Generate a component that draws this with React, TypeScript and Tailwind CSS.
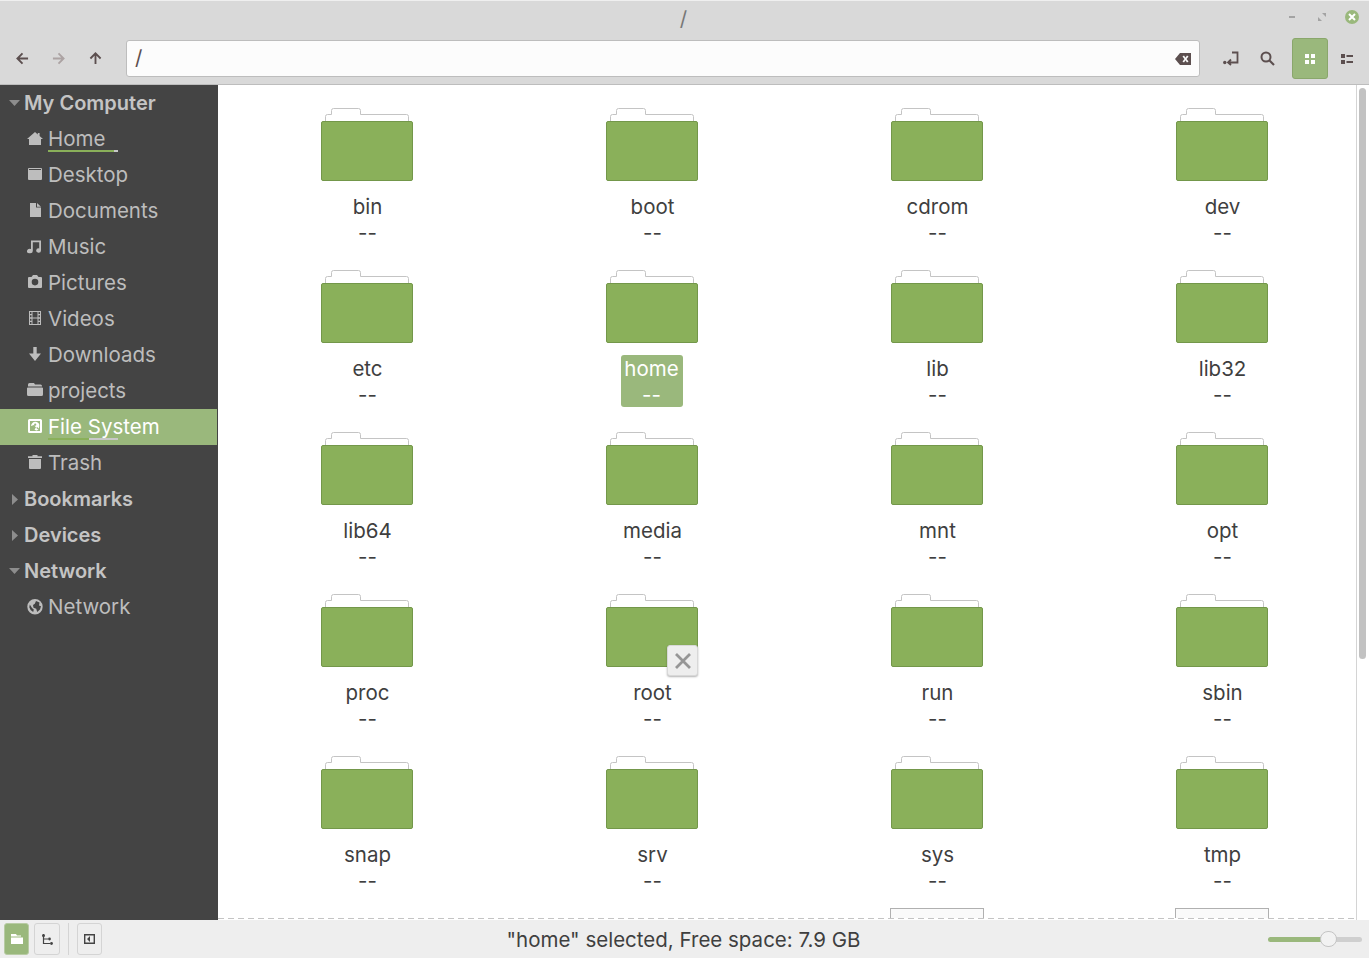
import React from "react";

const names = ["bin","boot","cdrom","dev","etc","home","lib","lib32","lib64","media","mnt","opt","proc","root","run","sbin","snap","srv","sys","tmp"];

function Folder() {
  return (
    <svg width="92" height="73" viewBox="0 0 92 73" className="block">
      <path d="M4.5 13.5V8.5Q4.5 6.5 6.5 6.5H10.5V2.5Q10.5 0.5 12.5 0.5H37.5Q39.5 0.5 39.5 2.5V6.5H85.5Q87.5 6.5 87.5 8.5V13.5Z" fill="#fff" stroke="#c4c4c4" />
      <rect x="0.5" y="13.5" width="91" height="59" rx="1.5" fill="#8ab05a" stroke="#73974a" />
    </svg>
  );
}

function Item({ name }: { name: string }) {
  const sel = name === "home";
  return (
    <div className="relative flex h-[162px] flex-col items-center">
      <div className="mt-[23px] -translate-x-px"><Folder /></div>
      {sel ? (
        <div className="mt-[12px] flex h-[52px] w-[62px] -translate-x-px flex-col items-center rounded-[3px] bg-[#9ab87c] text-white">
          <div className="h-[28px] leading-[28px]">{name}</div>
          <div className="h-[24px] leading-[24px]">--</div>
        </div>
      ) : (
        <div className="mt-[12px] flex flex-col items-center text-[#3f3f3f]">
          <div className="h-[28px] leading-[28px]">{name}</div>
          <div className="h-[24px] leading-[24px]">--</div>
        </div>
      )}
      {name === "root" && (
        <div className="absolute left-[157px] top-[74px] flex h-[31px] w-[31px] items-center justify-center rounded-[3px] border border-[#d8d8d8] bg-[#eeeeee] shadow-[0_1px_2px_rgba(0,0,0,0.3)]">
          <svg width="18" height="18" viewBox="0 0 18 18"><path d="M2 2L16 16M16 2L2 16" stroke="#969696" strokeWidth="2.8" /></svg>
        </div>
      )}
    </div>
  );
}

const I = ({ children }: { children: React.ReactNode }) => (
  <svg width={16} height={16} viewBox="0 0 16 16" fill="currentColor" className="block shrink-0">{children}</svg>
);

const icons: Record<string, React.ReactNode> = {
  Home: <I><path d="M8 1L10.8 3.4V2H12.6V5L16 8H14V14H2V8H0Z" /></I>,
  Desktop: <I><path fillRule="evenodd" d="M2 1H14Q15 1 15 2V12Q15 13 14 13H2Q1 13 1 12V2Q1 1 2 1ZM2 2V3H14V2Z" /></I>,
  Documents: <I><path d="M3 0H9V4.5H14V14H3ZM10 0L14 3.8H10Z" /></I>,
  Music: <I><path d="M4 1.5H14V11.5A2.4 2.2 0 1 1 12.2 9.4V3.2H5.8V12A2.9 2.2 0 1 1 4 10Z" /></I>,
  Pictures: <I><path fillRule="evenodd" d="M4.5 2L6 0H10L11.5 2H14Q15 2 15 3V12Q15 13 14 13H2Q1 13 1 12V3Q1 2 2 2ZM8 3.8A3.3 3.3 0 1 0 8 10.4A3.3 3.3 0 1 0 8 3.8Z" /></I>,
  Videos: <I><path fillRule="evenodd" d="M2 0H14V14H2ZM3 1V3H4.5V1ZM3 4.2V6.2H4.5V4.2ZM3 7.8V9.8H4.5V7.8ZM3 11V13H4.5V11ZM11.5 1V3H13V1ZM11.5 4.2V6.2H13V4.2ZM11.5 7.8V9.8H13V7.8ZM11.5 11V13H13V11ZM5.5 1V6.5H10.5V1ZM5.5 7.5V13H10.5V7.5Z" /></I>,
  Downloads: <I><path d="M6.3 0H9.7V6.5H14L8 14L2 6.5H6.3Z" /></I>,
  projects: <I><path d="M1 3.4V1.5Q1 0 2.5 0H7L8 1.5H13.5Q15 1.5 15 3V3.4ZM0 5.2Q0 4.4 1 4.4H15Q16 4.4 16 5.2V11.5Q16 13 14.5 13H1.5Q0 13 0 11.5Z" /></I>,
  "File System": <I><path fillRule="evenodd" d="M2.5 0H13.5Q15 0 15 1.5V12.5Q15 14 13.5 14H2.5Q1 14 1 12.5V1.5Q1 0 2.5 0ZM3 2V12H13V2ZM8.5 2.8A4.3 4.3 0 0 0 4 7L7 6L9 8.5L7.5 10.5L9 11.5H10L12 10V8.8Q13 5 11 3.8Q10 2.8 8.5 2.8ZM8.2 4.6A1.1 1.1 0 1 1 8.2 6.8A1.1 1.1 0 1 1 8.2 4.6ZM10 8L12 9.5L11.2 10.5L9.3 9Z" /></I>,
  Trash: <I><path d="M5.5 0H10.5V1.2H15V3H1V1.2H5.5ZM2 4H14V13Q14 14 13 14H3Q2 14 2 13Z" /></I>,
  Network: <I><path fillRule="evenodd" d="M8 0A7.7 7.7 0 1 0 8 15.4A7.7 7.7 0 1 0 8 0ZM9 2L12.5 3.5L12 6.5L14 7.2L13 10.5L10.2 13L9.2 9.8L6.5 8.8L6 6L7.8 4.8ZM2.8 5.5L5 9L6.8 10.6L6.2 13Q3 11.5 2.3 8.3Z" /></I>,
};

function Head({ label, open }: { label: string; open?: boolean }) {
  return (
    <div className="flex h-[36px] items-center text-[#c4c4c4]">
      <div className="flex w-[24px] justify-center pl-[5px] text-[#8d8d8d]">
        {open ? (
          <svg width="11" height="6" viewBox="0 0 11 6"><path d="M0 0H11L5.5 6Z" fill="currentColor" /></svg>
        ) : (
          <svg width="6" height="11" viewBox="0 0 6 11"><path d="M0 0V11L6 5.5Z" fill="currentColor" /></svg>
        )}
      </div>
      <span className="text-[20px] font-semibold">{label}</span>
    </div>
  );
}

function Place({ label, active, green, grey }: { label: string; active?: boolean; green?: number; grey?: number }) {
  return (
    <div className={`relative flex h-[36px] items-center gap-[5px] pl-[27px] ${active ? "mr-px bg-[#9ab87c] text-white" : "text-[#bdbdbd]"}`}>
      {icons[label]}
      <span>{label}</span>
      {green !== undefined && (
        <div className="absolute left-[48px] top-[29px] flex h-[2px] w-[70px]">
          <div style={{ width: green }} className="bg-[#8ab05a]" />
          <div style={{ width: grey }} className="bg-[#c8c8c8]" />
        </div>
      )}
    </div>
  );
}

const tool = "flex items-center justify-center text-[#5c4f4f]";

export default function App() {
  return (
    <div className="flex h-[958px] w-[1369px] flex-col overflow-hidden bg-white text-[20.5px] font-['Inter',sans-serif]">
      <div className="border-b border-[#bdbdbd] bg-[#d9d9d9]">
        <div className="relative flex h-[37px] items-center justify-center border-t border-[#efefef] text-[#777]">
          <span className="-translate-x-px">/</span>
          <div className="absolute right-[10px] top-[9px] flex items-center">
            <div className="mr-[23px] h-[2px] w-[6px] bg-[#a3a3a3]" />
            <svg width="8" height="8" viewBox="0 0 8 8" className="mr-[19px]"><path d="M0 8V4L4 8ZM8 0V4L4 0Z" fill="#a3a3a3" /></svg>
            <div className="flex h-[14px] w-[14px] items-center justify-center rounded-full bg-[#9ab87c]">
              <svg width="8" height="8" viewBox="0 0 8 8"><path d="M1 1L7 7M7 1L1 7" stroke="#fff" strokeWidth="2" /></svg>
            </div>
          </div>
        </div>
        <div className="flex h-[47px] items-start pt-[1px]">
          <div className="flex h-[40px] w-[126px] items-center pl-[16px]">
            <div className={`${tool} w-[36px] justify-start`}><svg width="13" height="13" viewBox="0 0 14 14"><path d="M13 7H2M7 1.5L1.5 7L7 12.5" fill="none" stroke="currentColor" strokeWidth="2" /></svg></div>
            <div className={`${tool} w-[37px] justify-start text-[#aca3a3]`}><svg width="13" height="13" viewBox="0 0 14 14"><path d="M1 7H12M7 1.5L12.5 7L7 12.5" fill="none" stroke="currentColor" strokeWidth="2" /></svg></div>
            <div className={`${tool} w-[13px]`}><svg width="13" height="13" viewBox="0 0 14 14"><path d="M7 13V2M1.5 7L7 1.5L12.5 7" fill="none" stroke="currentColor" strokeWidth="2" /></svg></div>
          </div>
          <div className="mt-[2px] flex h-[37px] w-[1074px] items-center justify-between rounded-[3px] border border-[#bdbdbd] bg-[#fcfcfc] pl-[8px] pr-[8px] text-[#5c4f4f]">
            <span>/</span>
            <svg width="16" height="14" viewBox="0 0 16 14"><path fillRule="evenodd" d="M5 1H16V13H5L0 7ZM7.5 4.5L9.5 7L7.5 9.5L9 10.5L10.5 8.3L12 10.5L13.5 9.5L11.5 7L13.5 4.5L12 3.5L10.5 5.7L9 3.5Z" fill="currentColor" /></svg>
          </div>
          <div className={`${tool} ml-[23px] mt-[1px] h-[38px] w-[16px]`}><svg width="16" height="15" viewBox="0 0 16 15"><path d="M9 1.5H14.5V11.5H6M8 8.5L5 11.5L8 14" fill="none" stroke="currentColor" strokeWidth="1.8" /><circle cx="1.8" cy="11.5" r="1.7" fill="currentColor" /></svg></div>
          <div className={`${tool} ml-[21px] mt-[1px] h-[38px] w-[15px]`}><svg width="15" height="15" viewBox="0 0 15 15"><circle cx="6" cy="6" r="4.5" fill="none" stroke="currentColor" strokeWidth="2" /><path d="M9.5 9.5L14 14" stroke="currentColor" strokeWidth="2.2" /></svg></div>
          <div className="ml-[17px] flex h-[41px] w-[36px] items-center justify-center rounded-[3px] border border-[#8aa76c] bg-[#9ab87c]">
            <svg width="10" height="10" viewBox="0 0 10 10"><path d="M0 0H4V4H0ZM6 0H10V4H6ZM0 6H4V10H0ZM6 6H10V10H6Z" fill="#fff" /></svg>
          </div>
          <div className={`${tool} ml-[13px] h-[41px] w-[12px]`}><svg width="12" height="10" viewBox="0 0 12 10"><path d="M0 0H4V4H0ZM0 6H4V10H0ZM5.5 1H12V3H5.5ZM5.5 7H12V9H5.5Z" fill="currentColor" /></svg></div>
        </div>
      </div>
      <div className="flex min-h-0 flex-1">
        <div className="w-[218px] shrink-0 bg-[#444444]">
          <Head label="My Computer" open />
          <Place label="Home" green={66} grey={4} />
          <Place label="Desktop" />
          <Place label="Documents" />
          <Place label="Music" />
          <Place label="Pictures" />
          <Place label="Videos" />
          <Place label="Downloads" />
          <Place label="projects" />
          <Place label="File System" active green={41} grey={29} />
          <Place label="Trash" />
          <Head label="Bookmarks" />
          <Head label="Devices" />
          <Head label="Network" open />
          <Place label="Network" />
        </div>
        <div className="relative min-w-0 flex-1 overflow-hidden">
          <div className="grid w-[1138px] grid-cols-[repeat(4,285px)] pl-[7px]">
            {names.map((n) => <Item key={n} name={n} />)}
            <div />
            <div />
            <div className="flex justify-center"><div className="mt-[13px] h-[40px] w-[94px] -translate-x-px border border-[#b0b0b0] bg-[#fafafa]" /></div>
            <div className="flex justify-center"><div className="mt-[13px] h-[40px] w-[94px] -translate-x-px border border-[#b0b0b0] bg-[#fafafa]" /></div>
          </div>
          <div className="absolute bottom-0 left-0 right-0 h-[2px] bg-white">
            <div className="h-px bg-[repeating-linear-gradient(90deg,#c4c4c4_0,#c4c4c4_6px,#ffffff_6px,#ffffff_10px)]" />
          </div>
          <div className="absolute bottom-0 right-0 top-0 w-[13px] border-l border-[#d4d4d4] bg-white pl-[2px] pt-[3px]">
            <div className="h-[571px] w-[7px] rounded-[4px] bg-[#c2c2c2]" />
          </div>
        </div>
      </div>
      <div className="relative flex h-[38px] shrink-0 items-center justify-center bg-[#eeeeee] pt-[2px] text-[#3f3f3f]">
        <div className="absolute left-[4px] top-[3px] flex items-center">
          <div className="flex h-[32px] w-[25px] items-center justify-center rounded-[3px] border border-[#b8cba4] bg-[#9ab87c]">
            <svg width="12" height="10" viewBox="0 0 12 10"><path d="M0 0H5L6 1.5H10V2.5H0ZM0 3.5H12V10H0Z" fill="#fff" /></svg>
          </div>
          <div className="ml-[5px] flex h-[32px] w-[26px] items-center justify-center rounded-[3px] border border-[#d4d4d4]">
            <svg width="11" height="11" viewBox="0 0 11 11"><path d="M1.5 0V9.5H8M1.5 5H6" fill="none" stroke="#444" strokeWidth="1.2" /><circle cx="1.5" cy="1.5" r="1.5" fill="#444" /><circle cx="7.5" cy="5" r="1.4" fill="#444" /><circle cx="9.5" cy="9.5" r="1.4" fill="#444" /></svg>
          </div>
          <div className="ml-[8px] h-[32px] w-px bg-[#d4d4d4]" />
          <div className="ml-[8px] flex h-[32px] w-[25px] items-center justify-center rounded-[3px] border border-[#d4d4d4]">
            <svg width="11" height="10" viewBox="0 0 11 10"><path fillRule="evenodd" d="M0 0H11V10H0ZM1.4 1.4V8.6H9.6V1.4ZM3 5L6 2V8Z" fill="#444" /></svg>
          </div>
        </div>
        <span className="-translate-x-px">"home" selected, Free space: 7.9 GB</span>
        <div className="absolute right-[7px] top-[11px] flex h-[16px] w-[94px] items-center">
          <div className="h-[5px] w-[54px] rounded-l-[3px] bg-[#9ab87c]" />
          <div className="h-[5px] flex-1 rounded-r-[3px] bg-[#cfcfcf]" />
          <div className="absolute left-[52px] top-0 h-[16px] w-[17px] rounded-full border border-[#c4c4c4] bg-[#f2f2f2]" />
        </div>
      </div>
    </div>
  );
}
